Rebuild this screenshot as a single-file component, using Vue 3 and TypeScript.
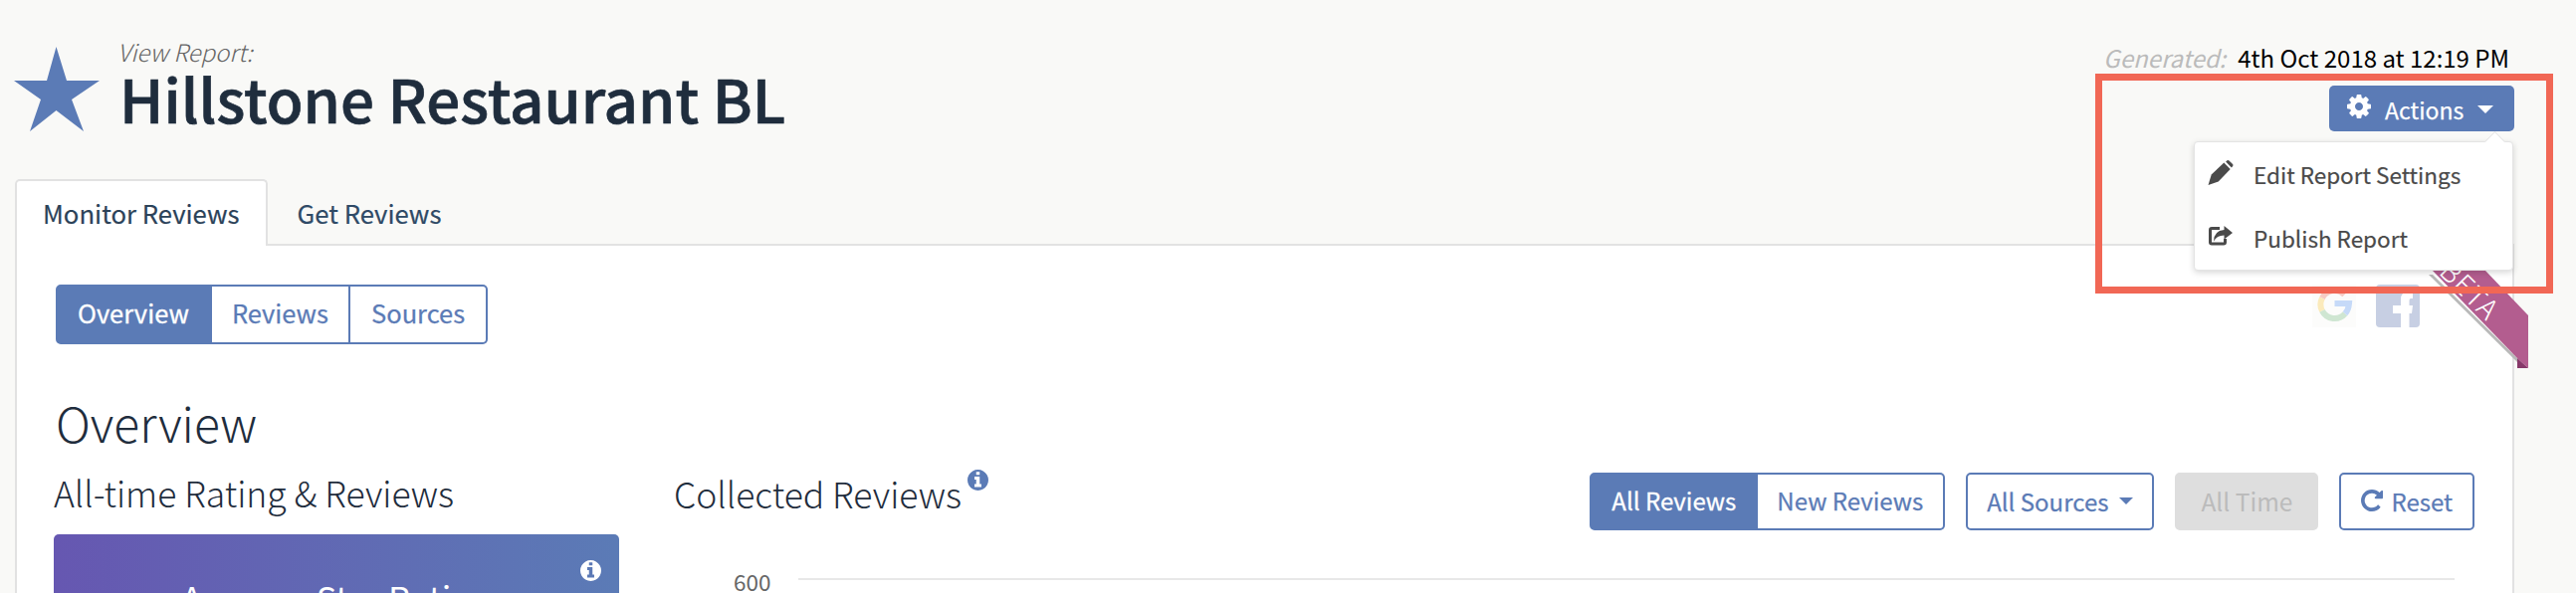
<script setup lang="ts">
const gear = 'M1152 896q0-106-75-181t-181-75-181 75-75 181 75 181 181 75 181-75 75-181zm512-109v222q0 12-8 23t-20 13l-185 28q-19 54-39 91 35 50 107 138 10 12 10 25t-9 23q-27 37-99 108t-94 71q-12 0-26-9l-138-108q-44 23-91 38-16 136-29 186-7 28-36 28h-222q-14 0-24.5-8.5t-11.5-21.5l-28-184q-49-16-90-37l-141 107q-10 9-25 9-14 0-25-11-126-114-165-168-7-10-7-23 0-12 8-23 15-21 51-66.5t54-70.5q-27-50-41-99l-183-27q-13-2-21-12.5t-8-23.5v-222q0-12 8-23t19-13l186-28q14-46 39-92-40-57-107-138-10-12-10-24 0-10 9-23 26-36 98.5-107.5t94.5-71.5q13 0 26 10l138 107q44-23 91-38 16-136 29-186 7-28 36-28h222q14 0 24.5 8.5t11.5 21.5l28 184q49 16 90 37l142-107q9-9 24-9 13 0 25 10 129 119 165 170 7 8 7 22 0 12-8 23-15 21-51 66.5t-54 70.5q26 50 41 98l183 28q13 2 21 12.5t8 23.5z'
const repeat = 'M1664 256v448q0 26-19 45t-45 19h-448q-42 0-59-40-17-39 14-69l138-138q-148-137-349-137-104 0-198.5 40.5t-163.5 109.5-109.5 163.5-40.5 198.5 40.5 198.5 109.5 163.5 163.5 109.5 198.5 40.5q119 0 225-52t179-147q7-10 23-12 15 0 25 9l137 138q9 8 9.5 20.5t-7.5 22.5q-109 132-264 204.5t-327 72.5q-156 0-298-61t-245-164-164-245-61-298 61-298 164-245 245-164 298-61q147 0 284.5 55.5t244.5 156.5l130-129q29-31 70-14 39 17 39 59z'
const info = 'M1152 1376v-160q0-14-9-23t-23-9h-96v-512q0-14-9-23t-23-9h-320q-14 0-23 9t-9 23v160q0 14 9 23t23 9h96v320h-96q-14 0-23 9t-9 23v160q0 14 9 23t23 9h448q14 0 23-9t9-23zm-128-896v-160q0-14-9-23t-23-9h-192q-14 0-23 9t-9 23v160q0 14 9 23t23 9h192q14 0 23-9t9-23zm640 416q0 209-103 385.5t-279.5 279.5-385.5 103-385.5-103-279.5-279.5-103-385.5 103-385.5 279.5-279.5 385.5-103 385.5 103 279.5 279.5 103 385.5z'
</script>

<template>
  <div class="page">
    <header class="head">
      <svg class="star" viewBox="0 0 86 85"><polygon points="42.5,0 53,34 86,34 58,53 70,85 42.5,64 16,85 27,53 0,34 33,34" /></svg>
      <div class="titles">
        <div class="eyebrow">View Report:</div>
        <h1 class="title">Hillstone Restaurant BL</h1>
      </div>
      <div class="meta">
        <div class="generated"><em>Generated:</em><span>4th Oct 2018 at 12:19 PM</span></div>
        <div class="actions-wrap">
          <button class="actions">
            <svg class="gear" viewBox="128 128 1536 1536"><path :d="gear" /></svg>
            <span>Actions</span>
            <i class="arrow"></i>
          </button>
          <div class="menu">
            <i class="menu-caret"></i>
            <div class="item">
              <svg class="item-icon" viewBox="0 0 25 25">
                <path d="M0 25 L3.2 14.6 L15.8 2.6 L22.2 9 L10.2 21.6 Z" />
                <path d="M17.6 1.4 L19 .3 Q20 -.3 21 .5 L24.6 4 Q25.3 5 24.6 6 L23.4 7.4 Z" />
              </svg>
              <span>Edit Report Settings</span>
            </div>
            <div class="item">
              <svg class="item-icon share" viewBox="0 0 24 20">
                <path d="M15.5 0 L24 7 L15.5 13.5 V9.5 Q8 9.5 5 15.5 Q5 5 15.5 4 Z" />
                <path class="share-box" d="M11 2.5 H3 Q1.5 2.5 1.5 4 V16.5 Q1.5 18 3 18 H15 Q16.5 18 16.5 16.5 V13" />
              </svg>
              <span>Publish Report</span>
            </div>
          </div>
        </div>
        <div class="callout"></div>
      </div>
    </header>

    <nav class="tabs">
      <div class="tab active">Monitor Reviews</div>
      <div class="tab">Get Reviews</div>
    </nav>

    <section class="panel">
      <svg class="ribbon" width="110" height="100" viewBox="2430 268 110 100">
        <polygon points="2438,274 2442,274 2527,358 2527,362" fill="#b9b9b9" />
        <polygon points="2442,270 2495,270 2538,315 2538,368 2527,358" fill="#b35d8f" />
        <polygon points="2527,358 2538,368 2527,368" fill="#87396a" />
        <text x="2479" y="300" transform="rotate(45 2479 290)" text-anchor="middle" class="ribbon-text">BETA</text>
      </svg>

      <div class="top-row">
        <div class="group nav">
          <button class="seg on">Overview</button>
          <button class="seg">Reviews</button>
          <button class="seg">Sources</button>
        </div>
        <div class="logos">
          <svg class="logo" viewBox="0 0 44 43">
            <rect width="44" height="43" fill="#fcfcfb" />
            <path d="M32.5 10.2A14 14 0 0 0 10 13.6" fill="none" stroke="#f6cbc4" stroke-width="6" />
            <path d="M10 13.6A14 14 0 0 0 10 26.4" fill="none" stroke="#fbeabb" stroke-width="6" />
            <path d="M10 26.4A14 14 0 0 0 33 29.3" fill="none" stroke="#cfe6d2" stroke-width="6" />
            <path d="M22.5 19H37Q36.5 25.5 33 29.3" fill="none" stroke="#c6daf8" stroke-width="6" />
          </svg>
          <svg class="logo fb" viewBox="0 0 44 43">
            <rect width="44" height="43" rx="4" fill="#c7cfe3" />
            <path d="M25 43V29H17V21H25V15Q25 7 33 7H37V14H35Q33.5 14 33.5 16V21H37L36 29H33.5V43Z" fill="#fff" />
          </svg>
        </div>
      </div>

      <h2 class="overview">Overview</h2>

      <div class="cols">
        <div class="left">
          <h3 class="sub">All-time Rating &amp; Reviews</h3>
          <div class="card">
            <svg class="card-info" viewBox="128 128 1536 1536"><path :d="info" /></svg>
            <div class="card-title">Average Star Rating</div>
          </div>
        </div>
        <div class="right">
          <div class="chart-head">
            <h3 class="sub">Collected Reviews<svg class="sup-info" viewBox="128 128 1536 1536"><path :d="info" /></svg></h3>
            <div class="controls">
              <div class="group small">
                <button class="seg on">All Reviews</button>
                <button class="seg">New Reviews</button>
              </div>
              <button class="btn sources">All Sources<i class="mini-arrow"></i></button>
              <button class="btn disabled">All Time</button>
              <button class="btn resetbtn"><svg class="reset" viewBox="128 128 1536 1536"><path :d="repeat" /></svg>Reset</button>
            </div>
          </div>
          <div class="axis">
            <span>600</span>
            <i class="gridline"></i>
          </div>
        </div>
      </div>
    </section>
  </div>
</template>

<style>
html, body { margin: 0; background: #f9f9f7; }
body { height: 596px; overflow: hidden; }
</style>

<style scoped>
.page {
  box-sizing: border-box;
  width: 2588px;
  height: 596px;
  overflow: hidden;
  padding-left: 15px;
  background: #f9f9f7;
  font-family: "Noto Sans CJK SC", "Noto Sans CJK JP", "Liberation Sans", sans-serif;
  color: #1f2d3d;
}
button { font-family: inherit; cursor: pointer; }
h1, h2, h3 { margin: 0; }

.head { display: flex; height: 180px; width: 2511px; position: relative; }
.star { width: 86px; height: 85px; fill: #5b7bb6; margin: 47px 0 0 -1px; flex: none; }
.titles { margin: 38px 0 0 20px; flex: 1; }
.eyebrow { font-size: 24px; line-height: 28px; font-style: italic; font-weight: 300; color: #666; margin-left: -2px; }
.title { font-size: 60px; line-height: 64px; font-weight: 500; color: #1f2d3d; -webkit-text-stroke: .7px #1f2d3d; }

.meta { margin-top: 44px; width: 430px; position: relative; flex: none; }
.generated { display: flex; justify-content: flex-end; gap: 12px; font-size: 24px; line-height: 28px; padding-right: 5px; color: #000; }
.generated em { color: #bbb; font-style: italic; }

.actions-wrap { position: relative; display: flex; justify-content: flex-end; margin-top: 14px; }
.actions {
  width: 186px; height: 46px; display: flex; align-items: center; justify-content: flex-start;
  border: 0; border-radius: 5px; background: #5b7bb6; color: #fff; font-size: 23px; padding: 2px 0 0 18px; z-index: 3;
  -webkit-text-stroke: .25px #fff;
}
.gear { width: 24px; height: 24px; fill: #fff; margin: -6px 14px 0 0; }
.arrow { width: 0; height: 0; border: 8px solid transparent; border-top-color: #fff; border-bottom: 0; margin-left: 14px; }

.menu {
  position: absolute; right: 1px; top: 56px; width: 321px; height: 130px; box-sizing: border-box;
  background: #fff; border-radius: 4px; border: 1px solid #e4e4e4; box-shadow: 0 2px 6px rgba(0,0,0,.16); z-index: 5;
}
.menu-caret {
  position: absolute; right: 10px; top: -8px; width: 14px; height: 14px; background: #fff;
  transform: rotate(45deg); border-left: 1px solid #e4e4e4; border-top: 1px solid #e4e4e4;
}
.item { display: flex; align-items: center; height: 64px; padding-left: 13px; font-size: 22.5px; color: #4a4a4a; -webkit-text-stroke: .2px #4a4a4a; }
.item-icon { width: 26px; height: 25px; fill: #4a4a4a; margin: -4px 20px 0 0; flex: none; }
.item-icon.share { width: 24px; height: 20px; margin: -4px 21px 0 1px; }
.share-box { fill: none; stroke: #4a4a4a; stroke-width: 3; }

.callout {
  position: absolute; left: 9px; top: 30px; width: 460px; height: 221px; box-sizing: border-box;
  border: 7px solid #f16755; z-index: 6; pointer-events: none;
}

.tabs { display: flex; height: 67px; margin-bottom: -2px; position: relative; z-index: 1; }
.tab { height: 67px; box-sizing: border-box; padding: 0 27px 0 28px; font-size: 25.7px; line-height: 63px; color: #2f4a66; border: 2px solid transparent; border-bottom: 0; white-space: nowrap; -webkit-text-stroke: .2px #2f4a66; }
.tab.active { background: #fff; border-color: #e2e2e2; border-radius: 5px 5px 0 0; color: #2c4258; padding: 0 26px; }

.panel {
  box-sizing: border-box; position: relative; width: 2511px; height: 400px;
  background: #fff; border: 2px solid #e2e2e2; border-bottom: 0; padding: 39px 0 0 39px;
}
.ribbon { position: absolute; left: 2415px; top: 23px; overflow: visible; z-index: 2; }
.ribbon-text { fill: #fff; font-size: 28px; font-weight: 300; letter-spacing: 1px; }

.top-row { display: flex; justify-content: space-between; align-items: flex-start; }
.group { display: flex; }
.seg {
  height: 60px; box-sizing: border-box; padding: 0 20px 4px; background: #fff; border: 2px solid #5b7bb6; border-left: 0;
  color: #5b7bb6; font-size: 25.5px; line-height: 1; white-space: nowrap; -webkit-text-stroke: .25px #5b7bb6;
}
.seg:first-child { border-left: 2px solid #5b7bb6; border-radius: 5px 0 0 5px; padding: 0 21px 4px 20px; }
.seg:last-child { border-radius: 0 5px 5px 0; }
.group.nav .seg:last-child { padding: 0 21px 4px; }
.seg.on { background: #5b7bb6; color: #fff; -webkit-text-stroke: .3px #fff; }
.logos { display: flex; gap: 20px; margin: 0 93px 0 0; }
.logo { width: 44px; height: 43px; }

.overview { font-size: 48px; line-height: 70px; font-weight: 300; margin-top: 43px; }
.cols { display: flex; margin-top: 13px; }
.left { width: 568px; flex: none; margin-left: -2px; }
.sub { font-size: 35.5px; line-height: 46px; font-weight: 300; white-space: nowrap; }
.card {
  margin-top: 19px; height: 120px; border-radius: 5px; position: relative; color: #fff;
  background: linear-gradient(90deg, #6657b1, #5b7bb6); overflow: hidden;
}
.card-info { position: absolute; right: 18px; top: 26px; width: 21px; height: 21px; fill: #fff; }
.card-title { text-align: center; font-size: 34.5px; line-height: 40px; padding-top: 43px; }

.right { margin-left: 55px; width: 1809px; flex: none; }
.chart-head { display: flex; justify-content: space-between; align-items: flex-start; }
.sup-info { width: 21px; height: 21px; fill: #5b7bb6; vertical-align: 18px; margin-left: 6px; }
.controls { display: flex; gap: 21px; margin-top: 3px; align-items: flex-start; }
.group.small .seg { height: 58px; font-size: 24px; padding: 0 20px 2px 19px; }
.group.small .seg:first-child { padding: 0 20px 2px 20px; }
.btn {
  height: 58px; box-sizing: border-box; padding: 0 20px 2px; background: #fff; border: 2px solid #5b7bb6; border-radius: 5px;
  color: #5b7bb6; font-size: 24px; display: flex; align-items: center; white-space: nowrap; -webkit-text-stroke: .25px #5b7bb6;
}
.btn.sources { padding: 0 19px 2px 19px; }
.btn.resetbtn { padding: 0 20px 2px 20px; }
.btn.disabled { background: #dedede; border-color: #dedede; color: #bbb; padding: 0 24px 2px; font-size: 24.5px; -webkit-text-stroke: 0; }
.mini-arrow { width: 0; height: 0; border: 7px solid transparent; border-top-color: #5b7bb6; border-bottom: 0; margin-left: 11px; }
.reset { width: 22px; height: 22px; fill: #5b7bb6; margin-right: 8px; }

.axis { display: flex; align-items: center; margin: 41px 0 0 60px; }
.axis span { font-size: 22.5px; line-height: 20px; color: #666; width: 65px; }
.gridline { display: block; width: 1664px; height: 2px; background: #e8e8e8; margin-top: -4px; }
</style>
